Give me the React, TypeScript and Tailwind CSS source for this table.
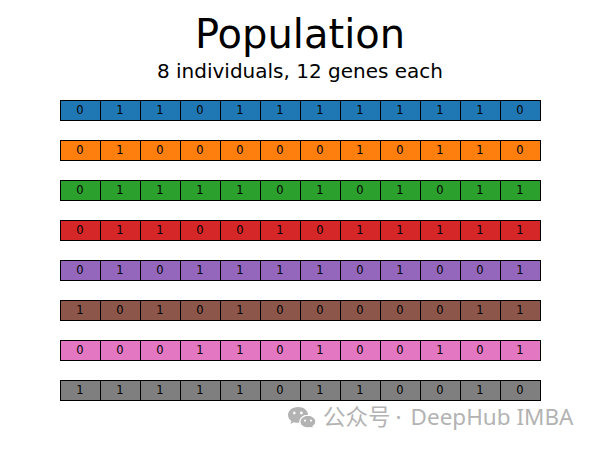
import React from "react";

const rows: { color: string; genes: number[] }[] = [
  { color: "bg-[#1f77b4]", genes: [0, 1, 1, 0, 1, 1, 1, 1, 1, 1, 1, 0] },
  { color: "bg-[#ff7f0e]", genes: [0, 1, 0, 0, 0, 0, 0, 1, 0, 1, 1, 0] },
  { color: "bg-[#2ca02c]", genes: [0, 1, 1, 1, 1, 0, 1, 0, 1, 0, 1, 1] },
  { color: "bg-[#d62728]", genes: [0, 1, 1, 0, 0, 1, 0, 1, 1, 1, 1, 1] },
  { color: "bg-[#9467bd]", genes: [0, 1, 0, 1, 1, 1, 1, 0, 1, 0, 0, 1] },
  { color: "bg-[#8c564b]", genes: [1, 0, 1, 0, 1, 0, 0, 0, 0, 0, 1, 1] },
  { color: "bg-[#e377c2]", genes: [0, 0, 0, 1, 1, 0, 1, 0, 0, 1, 0, 1] },
  { color: "bg-[#7f7f7f]", genes: [1, 1, 1, 1, 1, 0, 1, 1, 0, 0, 1, 0] },
];

const WeChat = () => (
  <svg width="30" height="22" viewBox="0 0 30 22">
    <path d="M11 1C5.2 1 1 4.6 1 9c0 2.5 1.3 4.6 3.4 6l-.9 3 3.4-1.8c1.2.4 2.5.6 4.1.6 5.8 0 10-3.6 10-8S16.8 1 11 1z" fill="#b3b3b3" />
    <circle cx="7.3" cy="7" r="1.4" fill="#fff" />
    <circle cx="14.4" cy="7" r="1.4" fill="#fff" />
    <path d="M21 9.2c-4.6 0-8.2 3-8.2 6.5s3.6 6.3 8.2 6.3c1 0 2-.1 2.9-.4l2.8 1.4-.7-2.4c1.8-1.2 3-2.9 3-4.9 0-3.5-3.5-6.5-8-6.5z" fill="#b3b3b3" stroke="#fff" strokeWidth="1.3" />
    <circle cx="18" cy="14.6" r="1.1" fill="#fff" />
    <circle cx="24" cy="14.6" r="1.1" fill="#fff" />
  </svg>
);

export default function App() {
  return (
    <div className="relative w-[600px] h-[450px] bg-white flex flex-col items-center font-['DejaVu_Sans',sans-serif] text-black">
      <div className="mt-[12px] text-[40px] leading-[44px]">Population</div>
      <div className="mt-[3px] text-[20px] leading-[24px]">8 individuals, 12 genes each</div>
      <div className="mt-[17px] flex flex-col gap-[19px]">
        {rows.map((row, i) => (
          <div key={i} className={`flex h-[21px] border border-black ${row.color}`}>
            {row.genes.map((g, j) => (
              <div
                key={j}
                className={`flex items-center justify-center pt-[1px] text-[11.5px] leading-none ${j < 11 ? "w-[40px] border-r border-black" : "w-[39px]"}`}
              >
                {g}
              </div>
            ))}
          </div>
        ))}
      </div>
      <div className="absolute left-[287px] top-[404px] flex items-center text-[#b3b3b3] font-['Noto_Sans','Noto_Sans_CJK_SC',sans-serif] text-[22.5px] leading-[26px]">
        <WeChat />
        <span className="ml-[6px]">公众号</span>
        <span className="ml-[5px] mr-[9px]">·</span>
        <span>DeepHub IMBA</span>
      </div>
    </div>
  );
}
